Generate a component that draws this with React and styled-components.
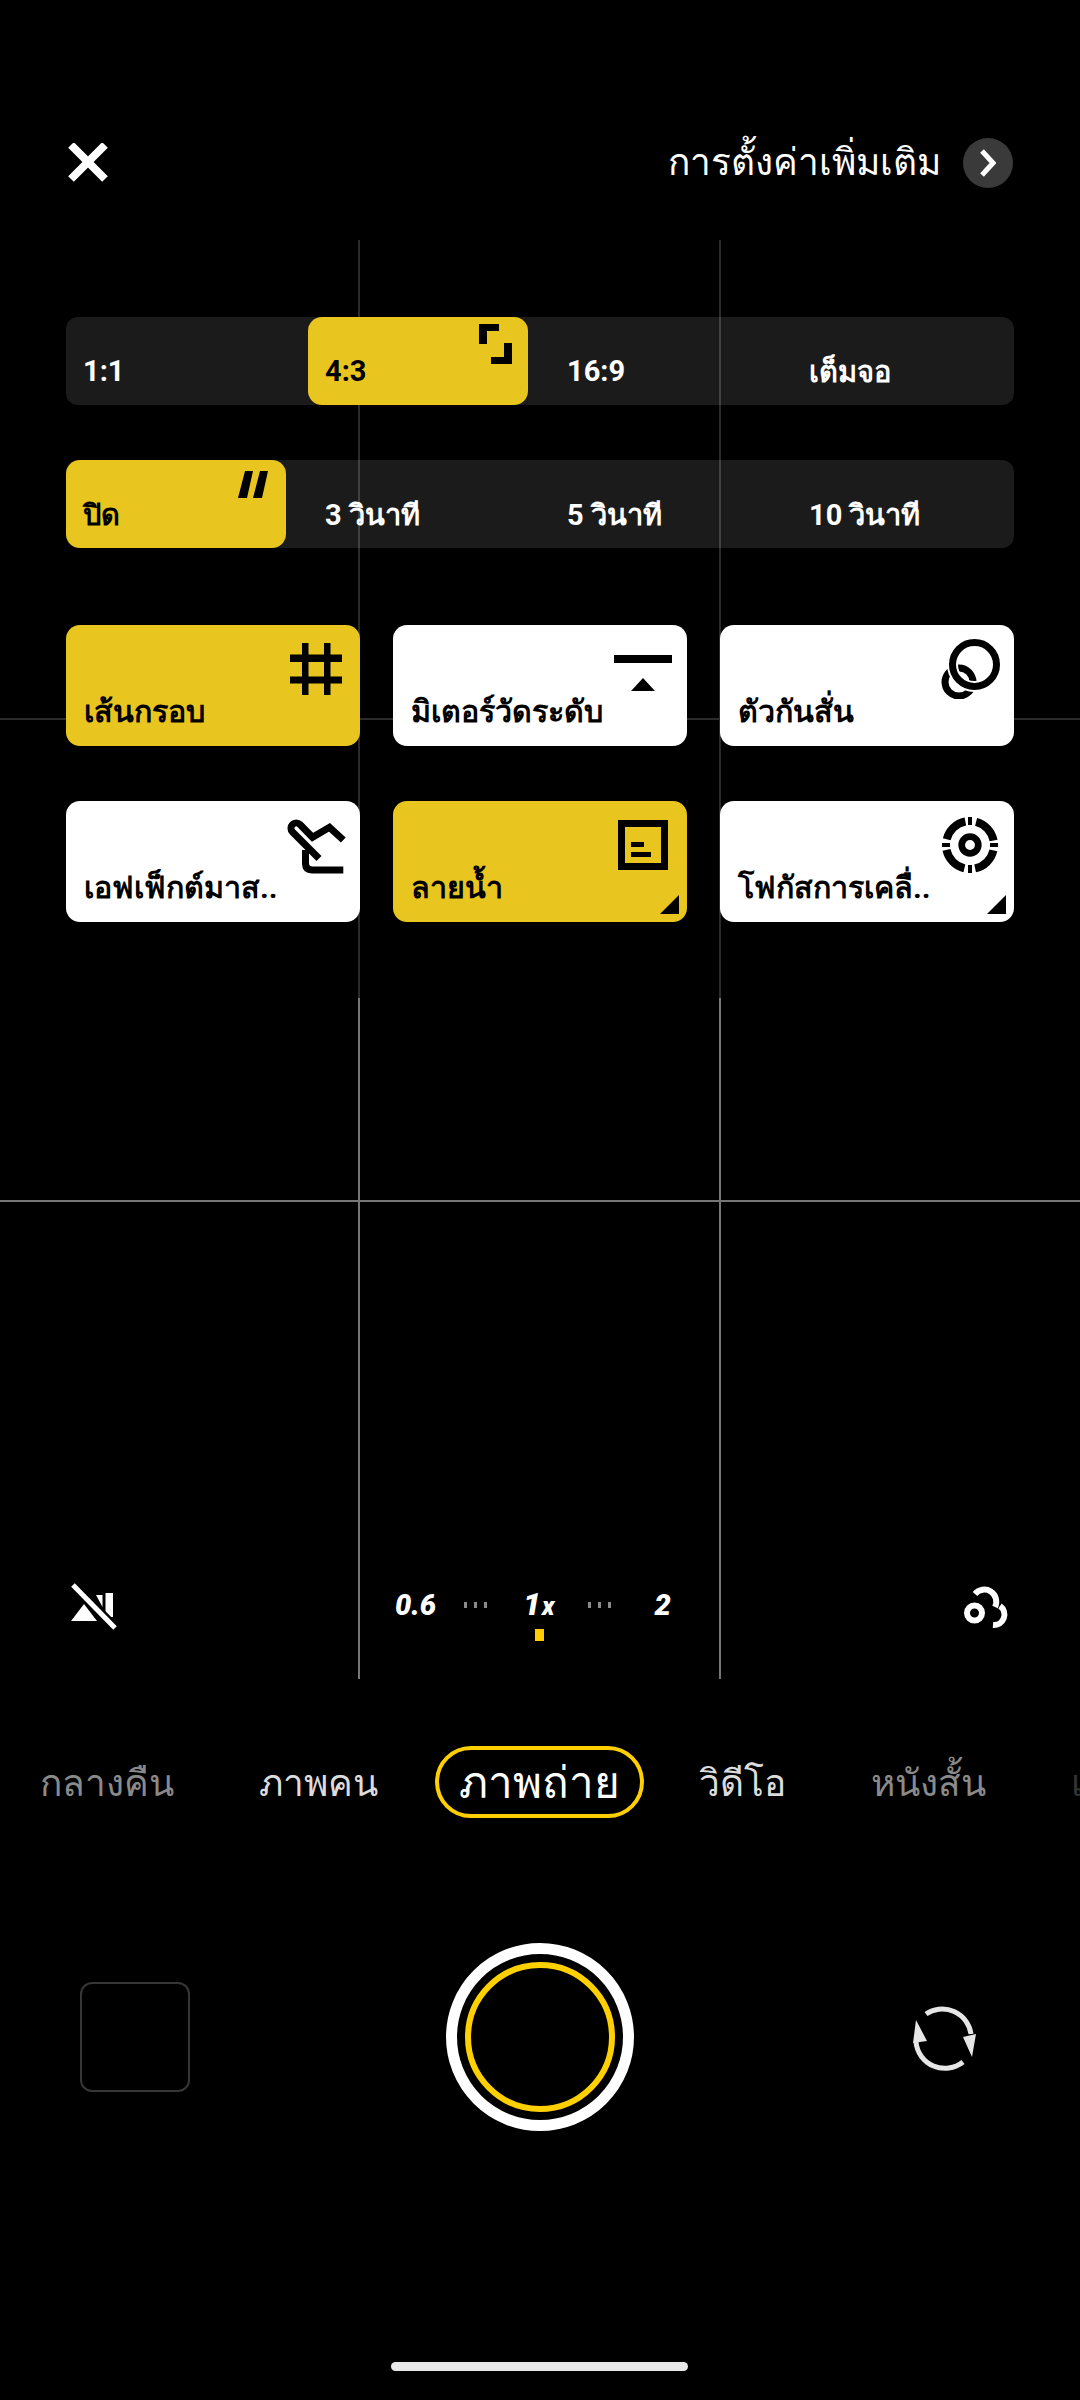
import React from 'react'
import styled, { createGlobalStyle } from 'styled-components'

const YELLOW = '#E9C51F'

const GlobalStyle = createGlobalStyle`
  html, body { margin: 0; padding: 0; background: #000; }
  * { box-sizing: border-box; }
  body { font-family: Roboto, "Noto Sans", "DejaVu Sans", sans-serif; }
`

const Page = styled.div`
  position: relative;
  width: 1080px;
  height: 2400px;
  background: #000;
  overflow: hidden;
  display: flex;
  flex-direction: column;
  color: #fff;
`

const GridLine = styled.div`
  position: absolute;
  left: ${(p) => p.$x}px;
  top: ${(p) => p.$y}px;
  width: ${(p) => p.$w}px;
  height: ${(p) => p.$h}px;
  background: ${(p) => (p.$bright ? '#767676' : '#2b2b2b')};
`

const Header = styled.div`
  position: relative;
  margin-top: 138px;
  height: 50px;
  padding: 0 67px 0 68px;
  display: flex;
  align-items: center;
  justify-content: space-between;
`

const HeaderLink = styled.div`
  display: flex;
  align-items: center;
  gap: 22px;
  font-size: 37px;
  line-height: 50px;
`

const RoundButton = styled.div`
  width: 50px;
  height: 50px;
  border-radius: 50%;
  background: #3a3a3a;
  display: flex;
  align-items: center;
  justify-content: center;
`

const Settings = styled.div`
  position: relative;
  margin-top: 129px;
  padding: 0 66px;
  display: flex;
  flex-direction: column;
`

const SegmentBar = styled.div`
  height: 88px;
  margin-bottom: ${(p) => p.$mb}px;
  border-radius: 12px;
  background: rgba(255, 255, 255, 0.105);
  display: grid;
  grid-template-columns: repeat(4, 220px);
  column-gap: 22px;
`

const Segment = styled.div`
  position: relative;
  border-radius: 14px;
  padding: ${(p) => (p.$thai ? 33 : 32)}px 0 0 17px;
  font-size: 29px;
  line-height: 44px;
  font-weight: 700;
  background: ${(p) => (p.$active ? YELLOW : 'transparent')};
  color: ${(p) => (p.$active ? '#000' : '#fff')};
`

const SegmentIcon = styled.svg`
  position: absolute;
  top: ${(p) => p.$top}px;
  right: ${(p) => p.$right}px;
`

const TileGrid = styled.div`
  display: grid;
  grid-template-columns: repeat(3, 294px);
  grid-auto-rows: 121px;
  column-gap: 33px;
  row-gap: 55px;
`

const Tile = styled.div`
  position: relative;
  border-radius: 14px;
  padding: 10px 10px 0 18px;
  background: ${(p) => (p.$active ? YELLOW : '#fff')};
  color: #000;
  display: flex;
  flex-direction: column;
`

const TileIcon = styled.svg`
  align-self: flex-end;
  flex: none;
`

const TileLabel = styled.div`
  margin-top: -7px;
  font-size: 30.4px;
  line-height: 40px;
  font-weight: 700;
  white-space: nowrap;
`

const CornerMark = styled.div`
  position: absolute;
  right: 8px;
  bottom: 8px;
  width: 19px;
  height: 19px;
  background: #000;
  clip-path: polygon(100% 0, 100% 100%, 0 100%);
`

const Toolbar = styled.div`
  position: absolute;
  left: 0;
  top: 1582px;
  width: 1080px;
  height: 50px;
  padding: 0 68px 0 70px;
  display: grid;
  grid-template-columns: 325px 290px 1fr;
  align-items: center;
`

const ZoomStrip = styled.div`
  position: relative;
  display: flex;
  align-items: center;
  height: 50px;
  padding-bottom: 4px;
`

const ZoomText = styled.span`
  margin-left: ${(p) => p.$ml}px;
  font-size: ${(p) => p.$size}px;
  font-weight: 900;
  font-style: italic;
  line-height: 30px;
`

const Dots = styled.div`
  margin-left: ${(p) => p.$ml}px;
  display: flex;
  gap: 7px;
  & > i {
    display: block;
    width: 3px;
    height: 6px;
    background: #8a8a8a;
  }
`

const ZoomMark = styled.div`
  position: absolute;
  left: 140px;
  top: 47px;
  width: 9px;
  height: 12px;
  background: #ffcc00;
`

const EndSlot = styled.div`
  justify-self: end;
  margin-right: ${(p) => p.$mr || 0}px;
  display: flex;
`

const Modes = styled.div`
  position: absolute;
  left: 40px;
  top: 1746px;
  width: 1040px;
  height: 72px;
  display: flex;
  align-items: center;
  white-space: nowrap;
  font-size: 37px;
  overflow: hidden;
`

const Mode = styled.div`
  flex: none;
  margin-right: 85px;
  color: ${(p) => p.$color};
`

const ActiveMode = styled.div`
  flex: none;
  margin: 0 55px 0 -28px;
  height: 72px;
  width: 209px;
  border: 4px solid #ffcf00;
  border-radius: 36px;
  display: flex;
  align-items: center;
  justify-content: center;
  font-size: 44px;
  color: #fff;
`

const CaptureRow = styled.div`
  position: absolute;
  left: 0;
  top: 1943px;
  width: 1080px;
  height: 188px;
  padding: 0 80px;
  display: grid;
  grid-template-columns: 1fr 188px 1fr;
  align-items: center;
`

const Thumb = styled.div`
  width: 110px;
  height: 110px;
  border: 2px solid #363636;
  border-radius: 12px;
`

const Shutter = styled.div`
  width: 188px;
  height: 188px;
  border-radius: 50%;
  border: 11px solid #fff;
  display: flex;
  align-items: center;
  justify-content: center;
`

const ShutterInner = styled.div`
  width: 150px;
  height: 150px;
  border-radius: 50%;
  border: 6px solid #ffd000;
`

const HomeBar = styled.div`
  position: absolute;
  left: 391px;
  top: 2362px;
  width: 297px;
  height: 9px;
  border-radius: 5px;
  background: #e8e8e8;
`

const CloseIcon = () => (
  <svg width="40" height="40" viewBox="0 1 40 40">
    <path d="M3 3 L37 37 M37 3 L3 37" stroke="#fff" strokeWidth="8" fill="none" />
  </svg>
)

const Chevron = () => (
  <svg width="16" height="28" viewBox="0 0 16 28">
    <path d="M2 2 L13 14 L2 26" stroke="#fff" strokeWidth="5" fill="none" />
  </svg>
)

const AspectIcon = () => (
  <SegmentIcon $top={7} $right={16} width="33" height="40" viewBox="0 0 33 40">
    <path d="M0 0 H20 V7 H8 V20 H0 Z M33 40 H12 V33 H25 V19 H33 Z" fill="#000" />
  </SegmentIcon>
)

const TimerIcon = () => (
  <SegmentIcon $top={11} $right={18} width="30" height="27" viewBox="0 0 30 27">
    <path d="M0 27 L7 0 H15 L9 27 Z M15 27 L22 0 H30 L24 27 Z" fill="#000" />
  </SegmentIcon>
)

const tileIcons = {
  grid: (
    <path d="M16 8 h6.5 v52 h-6.5 Z M38 8 h6.5 v52 h-6.5 Z M4 19.5 h52 v7.5 h-52 Z M4 41.5 h52 v7 h-52 Z" fill="currentColor" />
  ),
  level: <path d="M1 20 H59 V28 H1 Z M18 56 L30 43 L42 56 Z" fill="currentColor" />,
  stabilizer: (
    <>
      <circle cx="19" cy="47" r="14" fill="none" stroke="#000" strokeWidth="7" />
      <circle cx="34.5" cy="29.5" r="22" fill="none" stroke="#fff" strokeWidth="11" />
      <circle cx="34.5" cy="29.5" r="22" fill="none" stroke="#000" strokeWidth="7" />
    </>
  ),
  touch: (
    <path
      d="M33 47.5 L6.5 21 A5 5 0 0 1 14 13.5 L26.5 26.3 L43.5 16.3 L57.3 29 M19.5 39 V52 Q19.5 59 26.5 59 H57.3"
      fill="none"
      stroke="currentColor"
      strokeWidth="7"
    />
  ),
  watermark: (
    <path
      fillRule="evenodd"
      d="M5 9 H55 V59 H5 Z M12 16 V52 H48 V16 Z M18 31 H31 V36 H18 Z M18 41 H38 V46 H18 Z"
      fill="currentColor"
    />
  ),
  focus: (
    <>
      <circle cx="30" cy="34" r="24" fill="none" stroke="currentColor" strokeWidth="8" strokeDasharray="26.7 11" strokeDashoffset="-5.5" />
      <path d="M30 6 V14 M30 54 V62 M2 34 H10 M50 34 H58" stroke="currentColor" strokeWidth="4" />
      <circle cx="30" cy="34" r="8.3" fill="none" stroke="currentColor" strokeWidth="6.7" />
    </>
  ),
}

const tiles = [
  { label: 'เส้นกรอบ', icon: 'grid', active: true },
  { label: 'มิเตอร์วัดระดับ', icon: 'level' },
  { label: 'ตัวกันสั่น', icon: 'stabilizer' },
  { label: 'เอฟเฟ็กต์มาส..', icon: 'touch' },
  { label: 'ลายน้ำ', icon: 'watermark', active: true, corner: true },
  { label: 'โฟกัสการเคลื่..', icon: 'focus', corner: true },
]

const AiOffIcon = () => (
  <svg width="48" height="48" viewBox="20 14 48 48">
    <path d="M21 52 L34 35 L47 52 Z M46 26 H52.5 V38 Z M55.5 24 H63 V48 H55.5 Z" fill="#fff" />
    <path d="M23 16 L65 59" stroke="#000" strokeWidth="10" />
    <path d="M23 16 L65 59" stroke="#fff" strokeWidth="5" />
  </svg>
)

const FilterIcon = () => (
  <svg width="50" height="50" viewBox="12 12 50 50" fill="none" stroke="#fff" strokeWidth="6">
    <circle cx="24.5" cy="43" r="7.5" />
    <path d="M25 24 A12 12 0 0 1 45 37" />
    <path d="M50 36 A10.5 10.5 0 0 1 43 55" />
  </svg>
)

const FlipIcon = () => (
  <svg width="90" height="90" viewBox="0 0 90 90" fill="none" stroke="#e6e6e6" strokeWidth="5">
    <path d="M26 22 A29 29 0 0 1 71 42" />
    <path d="M63 70 A29 29 0 0 1 16 50" />
    <path d="M63 45 L76 42 L72 65 Z M16 28 L27 49 L13 51 Z" fill="#e6e6e6" stroke="none" />
  </svg>
)

export default function App() {
  return (
    <Page>
      <GlobalStyle />
      <GridLine $x={358} $y={240} $w={2} $h={758} />
      <GridLine $x={719} $y={240} $w={2} $h={758} />
      <GridLine $x={0} $y={718} $w={1080} $h={2} />
      <GridLine $x={358} $y={998} $w={2} $h={681} $bright />
      <GridLine $x={719} $y={998} $w={2} $h={681} $bright />
      <GridLine $x={0} $y={1200} $w={1080} $h={2} $bright />

      <Header>
        <CloseIcon />
        <HeaderLink>
          การตั้งค่าเพิ่มเติม
          <RoundButton><Chevron /></RoundButton>
        </HeaderLink>
      </Header>

      <Settings>
        <SegmentBar $mb={55}>
          <Segment>1:1</Segment>
          <Segment $active>4:3<AspectIcon /></Segment>
          <Segment>16:9</Segment>
          <Segment $thai>เต็มจอ</Segment>
        </SegmentBar>
        <SegmentBar $mb={77}>
          <Segment $active $thai>ปิด<TimerIcon /></Segment>
          <Segment $thai>3 วินาที</Segment>
          <Segment $thai>5 วินาที</Segment>
          <Segment $thai>10 วินาที</Segment>
        </SegmentBar>
        <TileGrid>
          {tiles.map((t) => (
            <Tile key={t.icon} $active={t.active}>
              <TileIcon width="64" height="64" viewBox="0 0 64 64">{tileIcons[t.icon]}</TileIcon>
              <TileLabel>{t.label}</TileLabel>
              {t.corner && <CornerMark />}
            </Tile>
          ))}
        </TileGrid>
      </Settings>

      <Toolbar>
        <AiOffIcon />
        <ZoomStrip>
          <ZoomText $ml={0} $size={29}>0.6</ZoomText>
          <Dots $ml={28}><i /><i /><i /></Dots>
          <ZoomText $ml={36} $size={32}>1<ZoomText $ml={1} $size={25}>x</ZoomText></ZoomText>
          <Dots $ml={33}><i /><i /><i /></Dots>
          <ZoomText $ml={44} $size={29}>2</ZoomText>
          <ZoomMark />
        </ZoomStrip>
        <EndSlot><FilterIcon /></EndSlot>
      </Toolbar>

      <Modes>
        <Mode $color="#8a8a8a">กลางคืน</Mode>
        <Mode $color="#dcdcdc">ภาพคน</Mode>
        <ActiveMode>ภาพถ่าย</ActiveMode>
        <Mode $color="#dcdcdc">วิดีโอ</Mode>
        <Mode $color="#8a8a8a">หนังสั้น</Mode>
        <Mode $color="#333">เ</Mode>
      </Modes>

      <CaptureRow>
        <Thumb />
        <Shutter><ShutterInner /></Shutter>
        <EndSlot $mr={10}><FlipIcon /></EndSlot>
      </CaptureRow>

      <HomeBar />
    </Page>
  )
}
